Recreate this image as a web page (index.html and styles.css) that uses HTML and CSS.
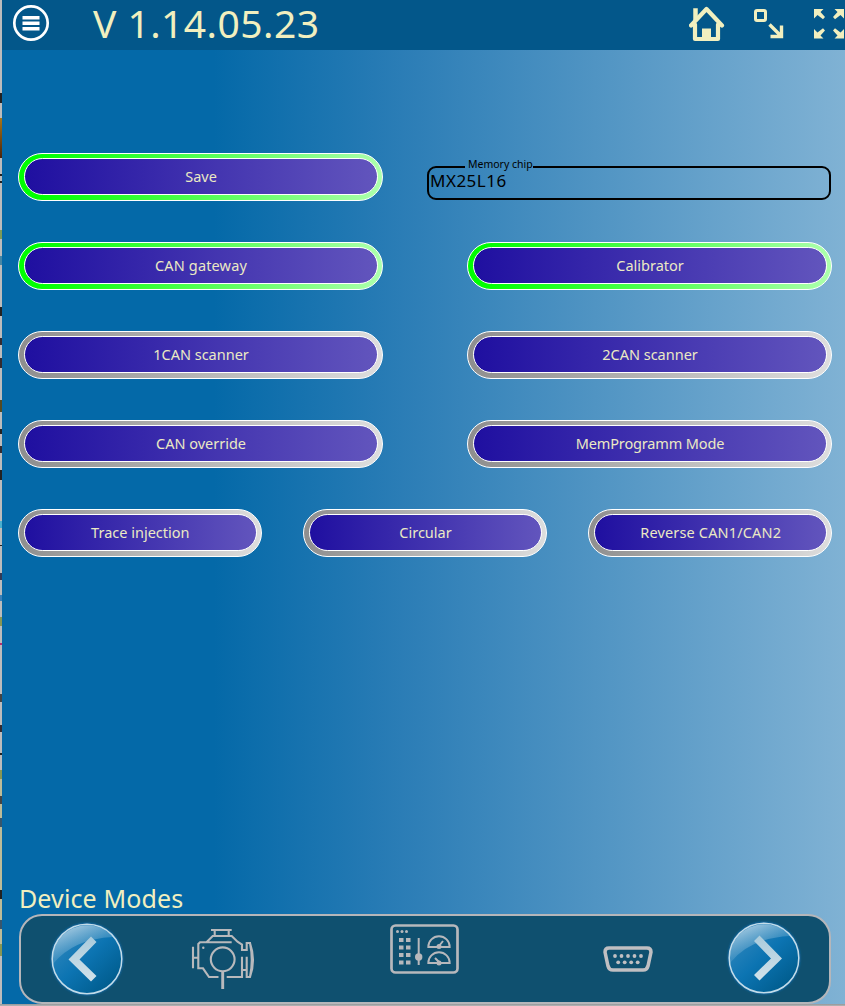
FILE: index.html
```html
<!DOCTYPE html>
<html lang="en">
<head>
<meta charset="utf-8">
<title>Device Modes</title>
<link rel="stylesheet" href="styles.css">
</head>
<body>
<div class="app">
  <header class="topbar">
    <svg class="menu" width="38" height="38" viewBox="0 0 38 38"><circle cx="19" cy="19" r="16.7" fill="none" stroke="#fff" stroke-width="2.7"/><path d="M10.500 13.700h17M10.500 19.200h17M10.500 24.700h17" stroke="#fff" stroke-width="3.400"/></svg>
    <h1 class="version">V 1.14.05.23</h1>
    <nav class="tools">
      <svg class="home" width="36" height="36" viewBox="0 0 36 36" fill="none" stroke="#f1efbf"><path d="M6 18.500V33h23V18.500M2 19.500L17.500 3 33 19.500" stroke-width="4.200" stroke-linejoin="round" stroke-linecap="round"/><path d="M5 14V3h3v8" fill="#f1efbf" stroke-width="1.500"/><path d="M13 22.500h9V35h-9z" fill="#f1efbf" stroke="none"/></svg>
      <svg class="shrink" width="30" height="30" viewBox="0 0 30 30" fill="none" stroke="#f1efbf"><rect x="1.500" y="1.500" width="10" height="10" rx="1.500" stroke-width="3"/><path d="M15.500 15.500l11.500 11.500M27.500 16.500v11H16.500" stroke-width="3.400"/></svg>
      <svg class="expand" width="31" height="30" viewBox="0 0 31 30" fill="#f1efbf"><g id="a"><path d="M0 0h9.500L6.500 3l4.500 5L9 10.200 3.500 6 0 9.500z"/></g><use href="#a" transform="translate(30 0) scale(-1 1)"/><use href="#a" transform="translate(0 29.500) scale(1 -1)"/><use href="#a" transform="translate(30 29.500) scale(-1 -1)"/></svg>
    </nav>
  </header>

  <main class="modes">
    <div class="row">
      <button class="pill on"><span class="face">Save</span></button>
      <fieldset class="chip"><legend>Memory chip</legend><span class="chip-value">MX25L16</span></fieldset>
    </div>
    <div class="row">
      <button class="pill on"><span class="face wide">CAN gateway</span></button>
      <button class="pill on"><span class="face">Calibrator</span></button>
    </div>
    <div class="row">
      <button class="pill"><span class="face">1CAN scanner</span></button>
      <button class="pill"><span class="face">2CAN scanner</span></button>
    </div>
    <div class="row">
      <button class="pill"><span class="face">CAN override</span></button>
      <button class="pill"><span class="face narrow">MemProgramm Mode</span></button>
    </div>
    <div class="row">
      <button class="pill small"><span class="face">Trace injection</span></button>
      <button class="pill small"><span class="face">Circular</span></button>
      <button class="pill small"><span class="face wide">Reverse CAN1/CAN2</span></button>
    </div>
  </main>

  <footer class="dock-area">
    <h2 class="dock-title">Device Modes</h2>
    <div class="dock">
      <svg class="round prev" width="76" height="76" viewBox="0 0 76 76">
        <defs>
          <linearGradient id="ball" x1="0.1" y1="0.1" x2="0.85" y2="0.9"><stop offset="0" stop-color="#3388bd"/><stop offset="0.5" stop-color="#0c74b2"/><stop offset="1" stop-color="#005c8d"/></linearGradient>
          <linearGradient id="shine" x1="0.1" y1="0" x2="0.65" y2="0.9"><stop offset="0" stop-color="#c3dbea" stop-opacity="0.95"/><stop offset="1" stop-color="#4e9bc8" stop-opacity="0.1"/></linearGradient>
          <linearGradient id="mark" x1="0" y1="0" x2="0" y2="1"><stop offset="0" stop-color="#a9cbdc"/><stop offset="1" stop-color="#d2e2ea"/></linearGradient>
          <filter id="glow" x="-10%" y="-10%" width="120%" height="120%"><feGaussianBlur stdDeviation="1"/></filter>
        </defs>
        <circle cx="38" cy="38" r="36" fill="#1971b5" filter="url(#glow)"/>
        <circle cx="38" cy="38" r="34.600" fill="url(#ball)"/>
        <path d="M4 43A34.400 34.400 0 0 1 64 16Q24 18 4 43z" fill="url(#shine)"/>
        <circle cx="38" cy="38" r="34.800" fill="none" stroke="#c3dce9" stroke-width="1.500"/>
        <path d="M42 15.500L47.500 21 30.500 38.500l17 16.500L42 60.500 19.500 38.500z" fill="url(#mark)"/>
      </svg>
      <svg class="engine" width="64" height="62" viewBox="0 0 64 62" fill="none" stroke="#b8b9bc" stroke-width="2.100"><path d="M20 2h20.700M23.700 2v6M37.700 2v6M40.700 14.300H9L7.300 16v24.300H12L18 49h9.500M15.500 14.300L21.700 8h19l5.800 5.700 4.500 2.800V22h4.700v-7H59q6 17 0 34h-3.300V28.700M35.700 49H51V28.700M51 42h4.700M2 18.700v21.600M2 29.700h5.300M59 15q3.500 17 0 34"/><circle cx="31.700" cy="31.300" r="11.900"/><path d="M31.700 43v18" stroke-width="2.900"/><circle cx="12.300" cy="19.700" r="1.200" fill="#b8b9bc" stroke="none"/></svg>
      <svg class="panel" width="70" height="51" viewBox="0 0 70 51" fill="none" stroke="#b7b8bc"><rect x="1.500" y="1.500" width="66" height="47" rx="4" stroke-width="2.700"/><g fill="#b7b8bc" stroke="none"><circle cx="7.500" cy="7.500" r="1.500"/><circle cx="12" cy="7.500" r="1.500"/><circle cx="16.500" cy="7.500" r="1.500"/><path d="M9 14h4.500v4H9zM16 14h4.500v4H16zM9 21.500h4.500v4H9zM16 21.500h4.500v4H16zM9 29h4.500v4H9zM16 29h4.500v4H16zM9 36.500h4.500v4H9zM16 36.500h4.500v4H16z"/><circle cx="28.700" cy="33" r="3.700"/><circle cx="49" cy="22.500" r="2.500"/><circle cx="49" cy="39" r="2.500"/></g><path d="M28.700 14v27" stroke-width="2"/><path d="M38.300 23a10.700 10.700 0 0 1 21.400 0zM38.300 39a10.700 10.700 0 0 1 21.400 0z" stroke-width="1.900"/><path d="M49 22l4-5M49 38l-4-4" stroke-width="2"/></svg>
      <svg class="serial" width="50" height="27" viewBox="0 0 50 27"><path d="M6 2h38q4 0 4 4l-3 14q-1 4-5 4H10q-4 0-5-4L2 6q0-4 4-4z" fill="none" stroke="#c0bfc2" stroke-width="3.500"/><g fill="#c0bfc2"><circle cx="12" cy="10" r="1.900"/><circle cx="18.500" cy="10" r="1.900"/><circle cx="25" cy="10" r="1.900"/><circle cx="31.500" cy="10" r="1.900"/><circle cx="38" cy="10" r="1.900"/><circle cx="15.200" cy="16.300" r="1.900"/><circle cx="21.700" cy="16.300" r="1.900"/><circle cx="28.200" cy="16.300" r="1.900"/><circle cx="34.700" cy="16.300" r="1.900"/></g></svg>
      <svg class="round next" width="76" height="76" viewBox="0 0 76 76">
        <circle cx="38" cy="38" r="36" fill="#1971b5" filter="url(#glow)"/>
        <circle cx="38" cy="38" r="34.600" fill="url(#ball)"/>
        <path d="M4 43A34.400 34.400 0 0 1 64 16Q24 18 4 43z" fill="url(#shine)"/>
        <circle cx="38" cy="38" r="34.800" fill="none" stroke="#c3dce9" stroke-width="1.500"/>
        <path d="M33.500 15.500L28 21 45 38.500 28 55l5.500 5.500L56 38.500z" fill="url(#mark)"/>
      </svg>
    </div>
  </footer>
</div>
</body>
</html>
```
FILE: styles.css
```css
* { box-sizing: border-box; }
body {
  margin: 0;
  height: 1006px;
  padding: 0 0 2px 2px;
  overflow: hidden;
  font-family: "Noto Sans", "Open Sans", sans-serif;
  /* sliver of the window behind the app */
  background:
    linear-gradient(#a87517, #4a230b) 0 118px / 2px 40px no-repeat,
    linear-gradient(#7e9a57, #7e9a57) 0 230px / 2px 9px no-repeat,
    linear-gradient(#222, #222) 0 93px / 2px 10px no-repeat,
    linear-gradient(#222, #222) 0 174px / 2px 2px no-repeat,
    linear-gradient(#222, #222) 0 181px / 2px 2px no-repeat,
    linear-gradient(#4787a5, #4787a5) 0 256px / 2px 9px no-repeat,
    linear-gradient(#222, #222) 0 307px / 2px 9px no-repeat,
    linear-gradient(#332b30, #332b30) 0 338px / 2px 7px no-repeat,
    linear-gradient(#332b30, #332b30) 0 358px / 2px 10px no-repeat,
    linear-gradient(#554a22, #554a22) 0 400px / 2px 12px no-repeat,
    linear-gradient(#222, #222) 0 429px / 2px 5px no-repeat,
    linear-gradient(#332b30, #332b30) 0 446px / 2px 7px no-repeat,
    linear-gradient(#222, #222) 0 470px / 2px 10px no-repeat,
    linear-gradient(#4ab0cf, #4ab0cf) 0 521px / 2px 7px no-repeat,
    linear-gradient(#222, #222) 0 545px / 2px 1px no-repeat,
    linear-gradient(#333a55, #333a55) 0 573px / 2px 7px no-repeat,
    linear-gradient(#3a80b8, #3a80b8) 0 595px / 2px 6px no-repeat,
    linear-gradient(#889654, #889654) 0 617px / 2px 9px no-repeat,
    linear-gradient(#b42d70, #b42d70) 0 643px / 2px 2px no-repeat,
    linear-gradient(#444, #444) 0 694px / 2px 8px no-repeat,
    linear-gradient(#332b30, #332b30) 0 725px / 2px 7px no-repeat,
    linear-gradient(#222, #222) 0 753px / 2px 2px no-repeat,
    linear-gradient(#889654, #889654) 0 770px / 2px 9px no-repeat,
    linear-gradient(#444, #444) 0 796px / 2px 8px no-repeat,
    linear-gradient(#36566d, #36566d) 0 818px / 2px 9px no-repeat,
    linear-gradient(#222, #222) 0 890px / 2px 9px no-repeat,
    linear-gradient(#38566d, #38566d) 0 920px / 2px 9px no-repeat,
    linear-gradient(#889654, #889654) 0 944px / 2px 12px no-repeat,
    linear-gradient(#bdbb98, #bdbb98) 0 779px / 2px 175px no-repeat,
    linear-gradient(#939598, #b5b6b7) 0 1004px / 845px 2px no-repeat,
    #bcbcbc;
}
.app {
  height: 1004px;
  display: flex;
  flex-direction: column;
  background: linear-gradient(90deg, #0469a8 0, #0469a8 212px, #2b7db6 400px, #80b2d4 843px);
}
.topbar {
  height: 50px;
  flex: none;
  display: flex;
  align-items: flex-start;
  background: #03578a;
}
.menu { margin: 4px 0 0 10px; }
.version {
  margin: 0 0 0 43px;
  font-size: 39px;
  line-height: 46px;
  font-weight: 400;
  letter-spacing: 0.45px;
  color: #f1efbf;
  white-space: nowrap;
}
.tools { margin-left: auto; display: flex; }
.home { margin: 6px 29px 0 0; }
.shrink { margin: 9px 30px 0 0; }
.expand { margin-top: 9px; }
.modes {
  padding: 103px 13px 0 16px;
  display: flex;
  flex-direction: column;
  gap: 41px;
}
.row { display: flex; justify-content: space-between; height: 48px; }
.pill {
  width: 365px;
  height: 48px;
  display: flex;
  padding: 4px 4px 5px 5px;
  border: 1px solid #fff;
  border-radius: 24px;
  background: linear-gradient(90deg, #8e8e8e, #dedede) border-box;
  font: inherit;
}
.pill.on { background: linear-gradient(90deg, #0f0 5%, #adffad) border-box; }
.pill.small { width: 243.6px; }
.face {
  flex: 1;
  border: 1px solid #fff;
  border-radius: 19px;
  background: linear-gradient(90deg, #1f0fa0, #6255bd);
  color: #ebe9c4;
  font-size: 14.5px;
  line-height: 35px;
  text-align: center;
  white-space: nowrap;
}
.face.wide { letter-spacing: 0.15px; }
.face.narrow { letter-spacing: -0.15px; }
.chip {
  width: 404px;
  height: 41px;
  margin: 6px 1px 0 0;
  padding: 0 0 0 1px;
  border: 2px solid #000;
  border-radius: 9px;
  color: #000;
}
.chip legend {
  margin-left: 35px;
  padding: 0 0 0 3px;
  font-size: 10.5px;
  line-height: 11px;
  height: 15px;
  white-space: nowrap;
}
.chip-value { display: block; font-size: 17px; line-height: 20px; letter-spacing: 0.5px; margin-top: -3px; }
.dock-area { margin-top: auto; padding: 0 14px 0 17px; }
.dock-title {
  margin: 0;
  font-size: 25px;
  line-height: 32px;
  font-weight: 400;
  letter-spacing: 0.12px;
  color: #f1efbf;
}
.dock {
  height: 90px;
  display: flex;
  align-items: flex-start;
  border: 2px solid #b5b6ba;
  border-radius: 23px;
  background: #0f506f;
}
.dock svg { flex: none; }
.prev { margin: 5px 0 0 28px; }
.engine { margin: 12px 0 0 66px; }
.panel { margin: 8px 0 0 135px; }
.serial { margin: 30px 0 0 143px; }
.next { margin: 4px 0 0 73px; }
```
